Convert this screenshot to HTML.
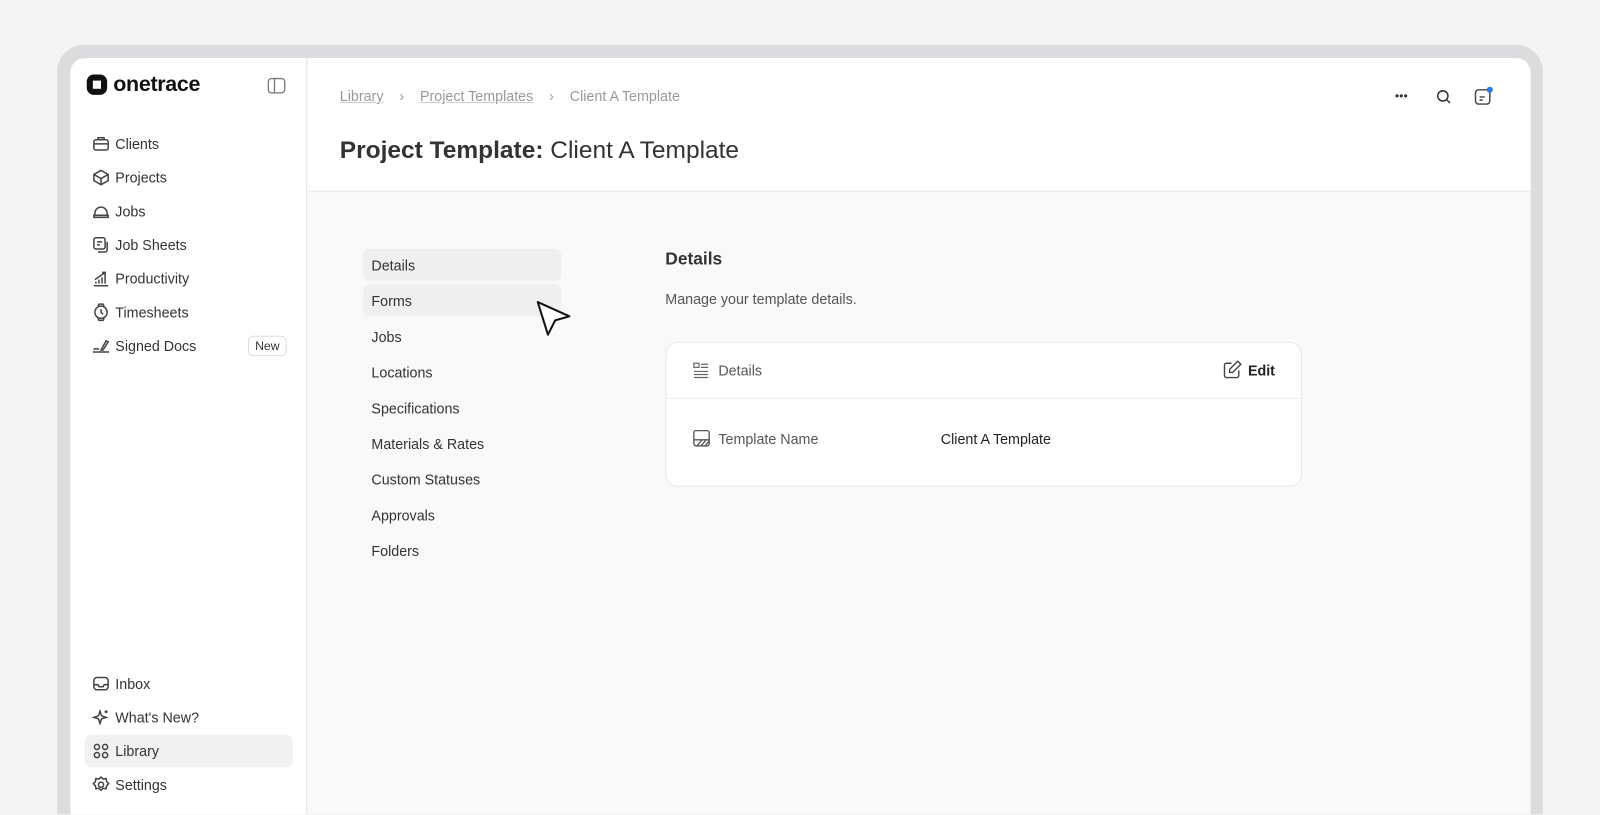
<!DOCTYPE html>
<html style="height:815px;overflow:hidden"><head><meta charset="utf-8"><style>
*{box-sizing:border-box;margin:0;padding:0}
body{width:1600px;height:815px;overflow:hidden;background:#f4f4f5;font-family:"Liberation Sans",sans-serif;color:#333;position:relative}
.wrap{position:absolute;left:0;top:0;width:1568px;height:798px;transform:scale(1.0204);transform-origin:0 0;overflow:hidden}
.frame{position:absolute;left:56px;top:44px;width:1456px;height:800px;background:#dcdcde;border-radius:26px}
.win{position:absolute;left:69px;top:57px;width:1431px;height:760px;background:#f9f9f9;border-radius:14px 14px 0 0;overflow:hidden}
.side{position:absolute;left:0;top:0;width:232px;height:100%;background:#fff;border-right:1px solid #e6e6e6}
.logo{position:absolute;left:15px;top:14px;font-size:21px;font-weight:bold;color:#111;display:flex;align-items:center;gap:5px;letter-spacing:-0.3px}
.nav{position:absolute;left:14px;width:204px;height:32px;display:flex;align-items:center;font-size:14px;color:#333;padding-left:7px;border-radius:7px}
.nav svg{width:18px;height:18px;margin-right:5px;stroke:#444;fill:none;stroke-width:1.5}
.head{position:absolute;left:233px;top:0;right:0;height:131px;background:#fff;border-bottom:1px solid #e8e8e8}
.crumb{position:absolute;left:31px;top:29px;font-size:14px;color:#999}
.crumb u{text-decoration:underline;text-decoration-color:#ccc}
h1{position:absolute;left:31px;top:77px;font-size:24px;font-weight:normal;color:#333}
.sub{position:absolute;left:287px;width:194px;height:31px;border-radius:6px;font-size:14px;color:#333;padding:8px 8px}
.card{position:absolute;left:583px;top:278px;width:624px;height:142px;background:#fff;border:1px solid #e8e8e8;border-radius:12px}
</style></head><body>
<div class="wrap">
<div class="frame"></div>
<div class="win">
<div class="side">
 <div class="logo"><svg width="22" height="22" viewBox="0 0 22 22"><rect x="1" y="1" width="20" height="20" rx="7" fill="#111"/><rect x="7" y="7" width="8" height="8" fill="#fff"/></svg>onetrace</div>
 <svg style="position:absolute;left:193px;top:19px" width="18" height="16" viewBox="0 0 18 16" fill="none" stroke="#777" stroke-width="1.3"><rect x="1" y="1" width="16" height="14" rx="3"/><line x1="7" y1="1" x2="7" y2="15"/></svg>
 <div class="nav" style="top:68px"><svg viewBox="0 0 18 18"><rect x="2" y="5" width="14" height="10" rx="2"/><path d="M6 5V3h6v2M2 9h14"/></svg>Clients</div>
 <div class="nav" style="top:101px"><svg viewBox="0 0 18 18"><path d="M9 2l7 4v6l-7 4-7-4V6zM2 6l7 4 7-4M9 10v6"/></svg>Projects</div>
 <div class="nav" style="top:134px"><svg viewBox="0 0 18 18"><path d="M3 11a6 6 0 0112 0v2H3zM2 13h14v2H2z"/></svg>Jobs</div>
 <div class="nav" style="top:167px"><svg viewBox="0 0 18 18"><rect x="2" y="2" width="11" height="11" rx="2"/><path d="M5 6h5M5 9h3M15 6v8a2 2 0 01-2 2H6"/></svg>Job Sheets</div>
 <div class="nav" style="top:200px"><svg viewBox="0 0 18 18"><path d="M2 16h14M4 14v-2M7 14v-4M10 14V8M13 14V6M3 10l10-7M10 3h3v3"/></svg>Productivity</div>
 <div class="nav" style="top:233px"><svg viewBox="0 0 18 18"><circle cx="9" cy="9" r="6"/><path d="M9 6v3l2 2M6 3l1-2h4l1 2M6 15l1 2h4l1-2"/></svg>Timesheets</div>
 <div class="nav" style="top:266px"><svg viewBox="0 0 18 18"><path d="M1 15h16M2 13c2-3 3 0 5-1M9 13l5-9 2 1-5 8z"/></svg>Signed Docs<span style="position:absolute;right:6px;top:6px;border:1px solid #ddd;border-radius:5px;font-size:12px;padding:2px 6px">New</span></div>
 <div class="nav" style="top:597px"><svg viewBox="0 0 18 18"><rect x="2" y="3" width="14" height="12" rx="3"/><path d="M2 10h4l1 2h4l1-2h4"/></svg>Inbox</div>
 <div class="nav" style="top:630px"><svg viewBox="0 0 18 18"><path d="M8 3l1.5 4.5L14 9l-4.5 1.5L8 15l-1.5-4.5L2 9l4.5-1.5zM14 2v3M12.5 3.5h3"/></svg>What's New?</div>
 <div class="nav" style="top:663px;background:#f1f1f2"><svg viewBox="0 0 18 18"><circle cx="5" cy="5" r="2.5"/><circle cx="13" cy="5" r="2.5"/><circle cx="5" cy="13" r="2.5"/><circle cx="13" cy="13" r="2.5"/></svg>Library</div>
 <div class="nav" style="top:696px"><svg viewBox="0 0 18 18"><circle cx="9" cy="9" r="2.5"/><path d="M9 1.5l2 2 3-.5.5 3 2 2-2 2-.5 3-3-.5-2 2-2-2-3 .5-.5-3-2-2 2-2 .5-3 3 .5z"/></svg>Settings</div>
</div>
<div class="head">
 <div class="crumb"><u>Library</u>&nbsp;&nbsp;&nbsp;&nbsp;›&nbsp;&nbsp;&nbsp;&nbsp;<u>Project Templates</u>&nbsp;&nbsp;&nbsp;&nbsp;›&nbsp;&nbsp;&nbsp;&nbsp;Client A Template</div>
 <h1><b>Project Template:</b> Client A Template</h1>
 <div style="position:absolute;left:1065px;top:30px;font-size:12px;color:#333">•••</div>
 <svg style="position:absolute;left:1105px;top:30px" width="16" height="16" viewBox="0 0 16 16" fill="none" stroke="#333" stroke-width="1.5"><circle cx="7" cy="7" r="5"/><path d="M11 11l3 3"/></svg>
 <svg style="position:absolute;left:1142px;top:27px" width="20" height="20" viewBox="0 0 20 20" fill="none" stroke="#444" stroke-width="1.4"><rect x="2" y="4" width="14" height="14" rx="3"/><path d="M6 11h5M6 14h3"/><circle cx="16" cy="4" r="3" fill="#2f7ae5" stroke="none"/></svg>
</div>
<div class="sub" style="top:187px;background:#efefef">Details</div>
<div class="sub" style="top:222px;background:#efefef">Forms</div>
<div class="sub" style="top:257px">Jobs</div>
<div class="sub" style="top:292px">Locations</div>
<div class="sub" style="top:327px">Specifications</div>
<div class="sub" style="top:362px">Materials &amp; Rates</div>
<div class="sub" style="top:397px">Custom Statuses</div>
<div class="sub" style="top:432px">Approvals</div>
<div class="sub" style="top:467px">Folders</div>
<svg style="position:absolute;left:456px;top:237px" width="36" height="40" viewBox="0 0 36 40"><path d="M2 2l31 14-14 4-7 14z" fill="#fff" stroke="#111" stroke-width="2" stroke-linejoin="round"/></svg>
<div style="position:absolute;left:583px;top:187px;font-size:17px;font-weight:bold;color:#333">Details</div>
<div style="position:absolute;left:583px;top:228px;font-size:14px;color:#555">Manage your template details.</div>
<div class="card">
 <svg style="position:absolute;left:26px;top:19px" width="16" height="16" viewBox="0 0 16 16" fill="none" stroke="#666" stroke-width="1.2"><rect x="1" y="1" width="5" height="4"/><path d="M8 2h7M8 5h7M1 9h14M1 12h14M1 15h14"/></svg>
 <div style="position:absolute;left:51px;top:19px;font-size:14px;color:#555">Details</div>
 <svg style="position:absolute;left:545px;top:17px" width="19" height="19" viewBox="0 0 19 19" fill="none" stroke="#444" stroke-width="1.4"><path d="M9 3H4a2 2 0 00-2 2v10a2 2 0 002 2h10a2 2 0 002-2v-5M15 1l3 3-8 8H7V9z"/></svg>
 <div style="position:absolute;left:570px;top:19px;font-size:14px;font-weight:bold;color:#222">Edit</div>
 <div style="position:absolute;left:0;right:0;top:54px;border-top:1px solid #eee"></div>
 <svg style="position:absolute;left:26px;top:85px" width="17" height="17" viewBox="0 0 17 17" fill="none" stroke="#555" stroke-width="1.3"><rect x="1" y="1" width="15" height="15" rx="2"/><path d="M1 10h15M4 16l5-6M8 16l5-6M12 16l4-5"/></svg>
 <div style="position:absolute;left:51px;top:86px;font-size:14px;color:#555">Template Name</div>
 <div style="position:absolute;left:269px;top:86px;font-size:14px;color:#222">Client A Template</div>
</div>
</div>
</div>
</body></html>
